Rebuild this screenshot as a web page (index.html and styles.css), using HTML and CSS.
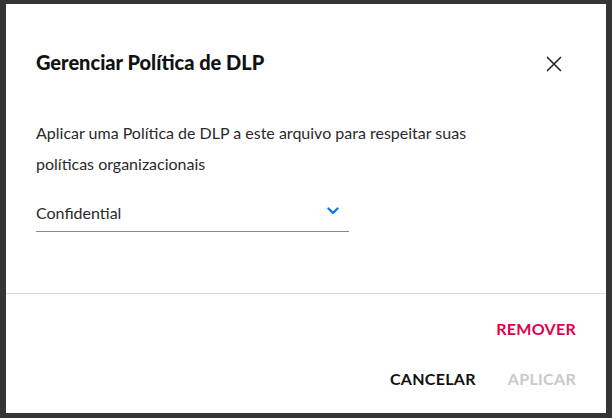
FILE: index.html
```html
<!DOCTYPE html>
<html lang="pt">
<head>
<meta charset="utf-8">
<link rel="stylesheet" href="styles.css">
</head>
<body>
<div class="backdrop">
  <div class="dialog">
    <div class="header">
      <h1 class="title">Gerenciar Política de DLP</h1>
      <button class="close" aria-label="Fechar">
        <svg width="16" height="16" viewBox="0 0 16 16"><path d="M1 1 L15 15 M15 1 L1 15" stroke="#222" stroke-width="1.5" fill="none"/></svg>
      </button>
    </div>
    <div class="content">
      <p class="desc">Aplicar uma Política de DLP a este arquivo para respeitar suas políticas organizacionais</p>
      <div class="select">
        <span class="select-value">Confidential</span>
        <svg class="chev" width="12" height="8" viewBox="0 0 12 8"><path d="M1.5 1.5 L6 6 L10.5 1.5" stroke="#1677e8" stroke-width="2.4" fill="none" stroke-linecap="round" stroke-linejoin="round"/></svg>
      </div>
    </div>
    <div class="footer">
      <div class="row"><button class="btn danger">REMOVER</button></div>
      <div class="row gap">
        <button class="btn">CANCELAR</button>
        <button class="btn disabled">APLICAR</button>
      </div>
    </div>
  </div>
</div>
</body>
</html>
```

FILE: styles.css
```css
html, body {
  margin: 0;
  padding: 0;
  width: 612px;
  height: 418px;
  overflow: hidden;
}
body {
  background: #353535;
  font-family: "Lato", "Noto Sans", sans-serif;
  color: #222;
}
.backdrop {
  padding: 4px 6px 5px 6px;
  height: 418px;
  box-sizing: border-box;
}
.dialog {
  background: #fff;
  width: 600px;
  height: 409px;
  display: flex;
  flex-direction: column;
}
.header {
  display: flex;
  justify-content: space-between;
  align-items: center;
  padding: 44px 44px 0 30px;
}
.title {
  margin: 0;
  font-size: 20px;
  font-weight: 900;
  color: #111;
  line-height: 28px;
}
.close {
  border: 0;
  background: none;
  padding: 0;
  width: 16px;
  height: 16px;
  margin-top: 4px;
  display: flex;
}
.content {
  padding: 0 30px;
  flex: 1;
  border-bottom: 1px solid #dcdcdc;
}
.desc {
  margin: 41px 0 0 0;
  font-size: 16px;
  line-height: 31px;
  color: #2a2a2a;
  width: 470px;
}
.select {
  margin-top: 19px;
  width: 313px;
  height: 29px;
  border-bottom: 1px solid #8a8a8a;
  display: flex;
  justify-content: space-between;
  align-items: center;
  padding-bottom: 4px;
  box-sizing: content-box;
}
.select-value {
  font-size: 16px;
  color: #2a2a2a;
}
.chev {
  margin-right: 10px;
  margin-top: -3px;
}
.footer {
  padding: 16px 30px 20px 30px;
  display: flex;
  flex-direction: column;
  gap: 20px;
  height: 119px;
  box-sizing: border-box;
  justify-content: flex-end;
}
.row {
  display: flex;
  justify-content: flex-end;
  align-items: center;
  height: 30px;
}
.row.gap { gap: 32px; }
.btn {
  border: 0;
  background: none;
  padding: 0;
  font-family: "Lato", "Noto Sans", sans-serif;
  font-size: 16px;
  font-weight: 700;
  color: #111;
  letter-spacing: 0.3px;
}
.btn.danger { color: #e3004b; }
.btn.disabled { color: #c9c9c9; }
```
